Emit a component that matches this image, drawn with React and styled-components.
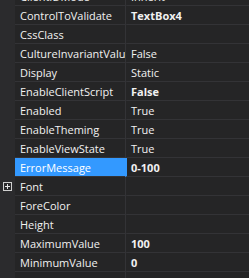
import React from "react";
import styled, { createGlobalStyle } from "styled-components";

const Global = createGlobalStyle`
  html, body { margin: 0; padding: 0; background: #252526; }
  body { width: 249px; height: 278px; overflow: hidden; }
`;

const Grid = styled.div`
  width: 249px;
  height: 278px;
  overflow: hidden;
  background: #252526;
  font-family: "Open Sans", "Noto Sans", sans-serif;
  font-size: 11px;
  color: #f1f1f1;
`;

const List = styled.div`
  margin-top: -13px;
  display: flex;
  flex-direction: column;
`;

const Row = styled.div`
  display: grid;
  grid-template-columns: 15px 111px 1fr;
  height: 19px;
`;

const Gutter = styled.div`
  background: #2b2b2d;
  display: flex;
  align-items: center;
  justify-content: center;
`;

const Name = styled.div`
  box-sizing: border-box;
  padding-left: 5px;
  line-height: 20px;
  white-space: nowrap;
  overflow: hidden;
  border-bottom: 1px solid #333336;
  border-right: 1px solid #333336;
  background: ${(p) => (p.$selected ? "#3399ff" : "transparent")};
  color: ${(p) => (p.$selected ? "#ffffff" : "#f1f1f1")};
`;

const Value = styled.div`
  box-sizing: border-box;
  padding-left: 4px;
  line-height: 20px;
  white-space: nowrap;
  overflow: hidden;
  border-bottom: 1px solid #333336;
  font-weight: ${(p) => (p.$bold ? 700 : 400)};
  border-left: 2px solid ${(p) => (p.$selected ? "#3399ff" : "transparent")};
  margin-left: -1px;
`;

const Expander = () => (
  <svg width="9" height="9" viewBox="0 0 9 9">
    <rect x="0.5" y="0.5" width="8" height="8" fill="none" stroke="#d0d0d0" />
    <path d="M2 4.5h5M4.5 2v5" stroke="#e8e8e8" />
  </svg>
);

const rows = [
  ["ClientIDMode", "Inherit"],
  ["ControlToValidate", "TextBox4", true],
  ["CssClass", ""],
  ["CultureInvariantValues", "False"],
  ["Display", "Static"],
  ["EnableClientScript", "False", true],
  ["Enabled", "True"],
  ["EnableTheming", "True"],
  ["EnableViewState", "True"],
  ["ErrorMessage", "0-100", true, true],
  ["Font", "", false, false, true],
  ["ForeColor", ""],
  ["Height", ""],
  ["MaximumValue", "100", true],
  ["MinimumValue", "0", true],
  ["SetFocusOnError", "False"],
];

export default function App() {
  return (
    <>
      <Global />
      <Grid>
        <List>
          {rows.map(([name, value, bold, selected, expandable]) => (
            <Row key={name}>
              <Gutter>{expandable && <Expander />}</Gutter>
              <Name $selected={selected}>{name}</Name>
              <Value $bold={bold} $selected={selected}>
                {value}
              </Value>
            </Row>
          ))}
        </List>
      </Grid>
    </>
  );
}
